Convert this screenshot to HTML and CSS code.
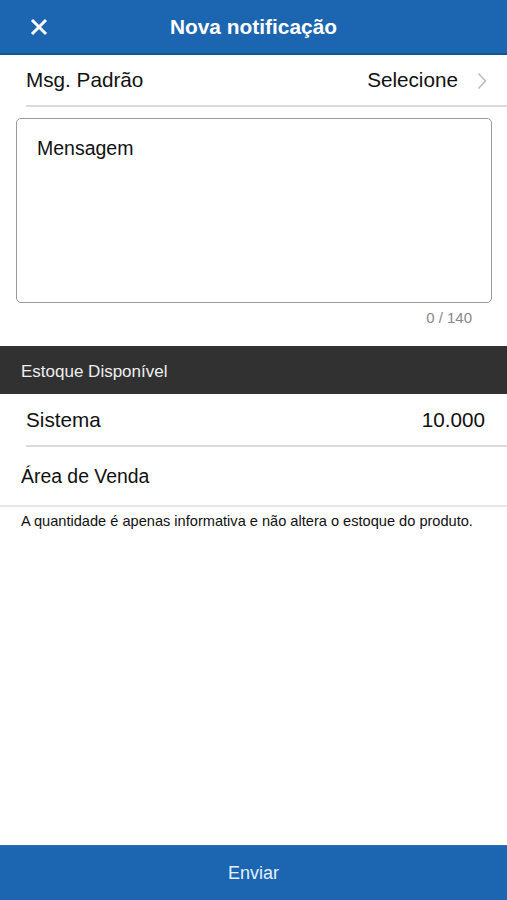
FILE: index.html
```html
<!DOCTYPE html>
<html lang="pt">
<head>
<meta charset="utf-8">
<link rel="stylesheet" href="styles.css">
</head>
<body>
<div class="app">
  <header class="topbar">
    <span class="close">
      <svg width="18" height="18" viewBox="0 0 18 18"><path d="M2 2 L16 16 M16 2 L2 16" stroke="#fff" stroke-width="3" stroke-linecap="butt"/></svg>
    </span>
    <h1 class="title">Nova notificação</h1>
  </header>

  <div class="row row-select">
    <span class="label">Msg. Padrão</span>
    <span class="value">Selecione
      <svg class="chev" width="10" height="18" viewBox="0 0 10 18"><path d="M1.5 1.5 L8.5 9 L1.5 16.5" fill="none" stroke="#bdbdbd" stroke-width="1.6"/></svg>
    </span>
  </div>

  <div class="message-wrap">
    <div class="message">Mensagem</div>
    <div class="counter">0 / 140</div>
  </div>

  <div class="section-bar">Estoque Disponível</div>

  <div class="row row-stock">
    <span class="label">Sistema</span>
    <span class="value">10.000</span>
  </div>
  <div class="row row-area">
    <span class="label">Área de Venda</span>
  </div>
  <p class="note">A quantidade é apenas informativa e não altera o estoque do produto.</p>

  <footer class="send">Enviar</footer>
</div>
</body>
</html>
```

FILE: styles.css
```css
* { box-sizing: border-box; }
html, body { margin: 0; padding: 0; }
body {
  font-family: "Liberation Sans", Arial, sans-serif;
  color: #111;
  background: #fff;
}
.app {
  height: 900px;
  display: flex;
  flex-direction: column;
}
.topbar {
  height: 55px;
  background: #1b65b1;
  border-bottom: 2px solid #14569a;
  display: flex;
  align-items: center;
  justify-content: center;
  position: relative;
}
.close {
  position: absolute;
  left: 30px;
  top: 18px;
  width: 18px;
  height: 18px;
  display: flex;
}
.title {
  margin: 0;
  color: #fff;
  font-size: 20.9px;
  font-weight: bold;
}
.row {
  display: flex;
  align-items: center;
  justify-content: space-between;
  font-size: 20.7px;
  color: #111;
}
.row-select {
  height: 52px;
  margin-left: 26px;
  padding-right: 20px;
  border-bottom: 2px solid #dcdcdc;
}
.row-select .value { gap: 19px; }
.value {
  display: flex;
  align-items: center;
  gap: 17px;
}
.chev { margin-top: 1px; }
.message-wrap {
  padding: 11px 15px 0 16px;
}
.message {
  height: 185px;
  border: 1.5px solid #9a9a9a;
  border-radius: 5px;
  padding: 18px 20px;
  font-size: 19.5px;
  color: #111;
}
.counter {
  text-align: right;
  padding-right: 20px;
  margin-top: 6px;
  font-size: 15px;
  color: #888;
  height: 37px;
}
.section-bar {
  height: 48px;
  background: #313131;
  color: #eee;
  font-size: 17px;
  display: flex;
  align-items: center;
  padding-left: 21px;
  padding-top: 3px;
}
.row-stock {
  height: 53px;
  margin-left: 26px;
  padding-right: 22px;
  border-bottom: 2px solid #dcdcdc;
}
.row-area {
  height: 60px;
  padding-left: 21px;
  font-size: 19.4px;
  border-bottom: 2px solid #e6e6e6;
}
.note {
  margin: 0;
  padding: 6px 0 0 21px;
  font-size: 14.6px;
  color: #111;
}
.send {
  margin-top: auto;
  height: 55px;
  background: #1b65b1;
  border-top: 1px solid #2a72b8;
  color: #e3efff;
  font-size: 18px;
  display: flex;
  align-items: center;
  justify-content: center;
}
```
